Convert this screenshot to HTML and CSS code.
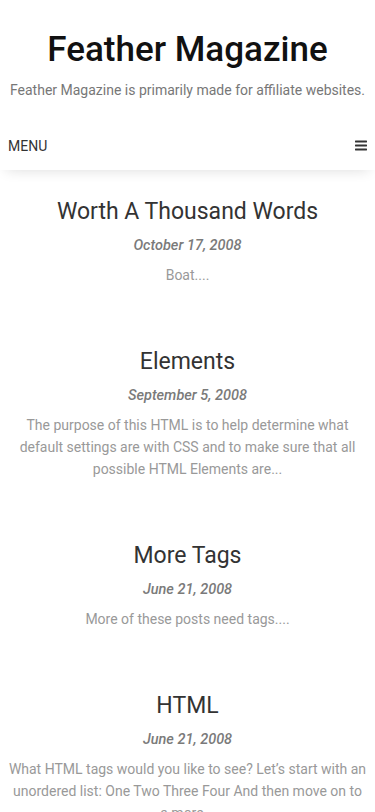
FILE: index.html
```html
<!DOCTYPE html>
<html>
<head>
<meta charset="utf-8">
<meta name="viewport" content="width=device-width, initial-scale=1">
<link rel="stylesheet" href="styles.css">
</head>
<body>
<header class="site-header">
  <h1 class="site-title">Feather Magazine</h1>
  <p class="site-desc">Feather Magazine is primarily made for affiliate websites.</p>
</header>
<nav class="menu-bar">
  <span class="menu-label">MENU</span>
  <svg class="menu-icon" width="12" height="11" viewBox="0 0 12 11" aria-hidden="true">
    <rect x="0" y="0.5" width="12" height="2" rx="0.4" fill="#333"/>
    <rect x="0" y="4.5" width="12" height="2" rx="0.4" fill="#333"/>
    <rect x="0" y="8.5" width="12" height="2" rx="0.4" fill="#333"/>
  </svg>
</nav>
<main class="posts">
  <article class="post">
    <h2 class="post-title">Worth A Thousand Words</h2>
    <div class="post-date">October 17, 2008</div>
    <p class="post-excerpt">Boat....</p>
  </article>
  <article class="post">
    <h2 class="post-title">Elements</h2>
    <div class="post-date">September 5, 2008</div>
    <p class="post-excerpt">The purpose of this HTML is to help determine what default settings are with CSS and to make sure that all possible HTML Elements are...</p>
  </article>
  <article class="post">
    <h2 class="post-title">More Tags</h2>
    <div class="post-date">June 21, 2008</div>
    <p class="post-excerpt">More of these posts need tags....</p>
  </article>
  <article class="post">
    <h2 class="post-title">HTML</h2>
    <div class="post-date">June 21, 2008</div>
    <p class="post-excerpt">What HTML tags would you like to see? Let’s start with an unordered list: One Two Three Four And then move on to a more...</p>
  </article>
</main>
</body>
</html>
```
FILE: styles.css
```css
html, body {
  margin: 0;
  padding: 0;
  background: #fff;
}
body {
  font-family: Roboto, "Liberation Sans", sans-serif;
  color: #333;
  overflow: hidden;
}
.site-header {
  text-align: center;
  padding-top: 30px;
}
.site-title {
  margin: 0;
  font-size: 35px;
  line-height: 40px;
  font-weight: 500;
  color: #111;
}
.site-desc {
  margin: 10px 0 0;
  font-size: 14px;
  line-height: 20px;
  color: #777;
}
.menu-bar {
  margin-top: 20px;
  height: 50px;
  display: flex;
  align-items: center;
  justify-content: space-between;
  padding: 0 8px 0 8px;
  background: #fff;
  box-shadow: 0 6px 14px -6px rgba(0,0,0,0.14);
}
.menu-label {
  font-size: 14px;
  color: #333;
  padding-top: 2px;
}
.menu-icon {
  display: block;
  margin-top: 1px;
}
.posts {
  padding: 27px 8.5px 0;
  display: flex;
  flex-direction: column;
  gap: 61px;
}
.post {
  text-align: center;
}
.post-title {
  margin: 0;
  font-size: 23px;
  line-height: 30px;
  font-weight: 400;
  color: #333;
}
.post-date {
  margin-top: 9px;
  font-size: 14.5px;
  line-height: 20px;
  font-style: italic;
  font-weight: 500;
  color: #7a7a7a;
}
.post-excerpt {
  margin: 8px 0 0;
  font-size: 14px;
  line-height: 22px;
  color: #999;
}
```
